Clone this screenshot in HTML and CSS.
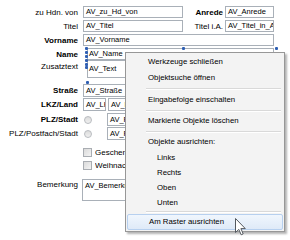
FILE: index.html
```html
<!DOCTYPE html>
<html>
<head>
    <title>Formularentwurf</title>
    <link rel="stylesheet" href="styles.css">
</head>
<body>
    <div class="form">
        <div class="row">
            <span class="lbl">zu Hdn. von</span>
            <div class="field w100">AV_zu_Hd_von</div>
            <span class="lbl2 b">Anrede</span>
            <div class="field w49">AV_Anrede</div>
        </div>
        <div class="row">
            <span class="lbl">Titel</span>
            <div class="field w100">AV_Titel</div>
            <span class="lbl2">Titel i.A.</span>
            <div class="field w49">AV_Titel_in_A</div>
        </div>
        <div class="row">
            <span class="lbl b">Vorname</span>
            <div class="field w191">AV_Vorname</div>
        </div>
        <div class="row row-name">
            <span class="lbl b">Name</span>
            <div class="field inset">AV_Name</div>
        </div>
        <div class="row row-text">
            <span class="lbl">Zusatztext</span>
            <div class="field inset tall">AV_Text</div>
        </div>
        <div class="row row-13 mb1">
            <span class="lbl b">Straße</span>
            <div class="field h13 w60">AV_Straße</div>
        </div>
        <div class="row row-13">
            <span class="lbl b">LKZ/Land</span>
            <div class="field h13 w23">AV_LK</div>
            <div class="field h13 w38">AV_L</div>
        </div>
        <div class="row row-13 mb1">
            <span class="lbl b">PLZ/Stadt</span>
            <span class="radio"></span>
            <div class="field h13 w38">AV_F</div>
        </div>
        <div class="row row-13 mb7">
            <span class="lbl">PLZ/Postfach/Stadt</span>
            <span class="radio"></span>
            <div class="field h13 w38">AV_F</div>
        </div>
        <div class="row row-check mb3">
            <span class="lbl"></span>
            <span class="check"></span>
            <span class="clip">Geschenk</span>
        </div>
        <div class="row row-check mb9">
            <span class="lbl"></span>
            <span class="check"></span>
            <span class="clip">Weihnachtskarte</span>
        </div>
        <div class="row row-memo">
            <span class="lbl">Bemerkung</span>
            <div class="field memo">AV_Bemerkung</div>
        </div>
    </div>

    <!-- Markierungspunkte der ausgewählten Steuerelemente -->
    <div class="handles">
        <span class="hd hd-t1"></span>
        <span class="hd hd-t2"></span>
        <span class="hd hd-t3"></span>
        <span class="hd hd-l1"></span>
        <span class="hd hd-l2"></span>
        <span class="hd hd-l3"></span>
        <span class="hd hd-l4"></span>
        <span class="hd hd-l5"></span>
        <span class="hd hd-l6"></span>
    </div>

    <div class="menu">
        <div class="item">Werkzeuge schließen</div>
        <div class="item">Objektsuche öffnen</div>
        <div class="sep s6"></div>
        <div class="item">Eingabefolge einschalten</div>
        <div class="sep s5"></div>
        <div class="item">Markierte Objekte löschen</div>
        <div class="sep s5"></div>
        <div class="item">Objekte ausrichten:</div>
        <div class="item sub">Links</div>
        <div class="item sub">Rechts</div>
        <div class="item sub">Oben</div>
        <div class="item sub">Unten</div>
        <div class="sep s4"></div>
        <div class="item hover">Am Raster ausrichten</div>
    </div>

    <svg class="cursor" width="12" height="18" viewBox="0 0 12 18">
        <path d="M0.5 0.5 L0.5 14.5 L3.8 11.4 L6.2 16.8 L8.2 15.9 L5.9 10.6 L10.3 10.6 Z" fill="#ffffff" stroke="#555a60" stroke-width="1"/>
    </svg>
</body>
</html>
```

FILE: styles.css
```css
body {
    margin: 0;
    width: 290px;
    height: 240px;
    overflow: hidden;
    position: relative;
    background-color: #ffffff;
    color: #000000;
    font-family: "Liberation Sans", Arial, sans-serif;
    font-size: 8px;
}

.form {
    padding-top: 6px;
}

.row {
    display: flex;
    align-items: center;
    height: 12px;
    margin-bottom: 2px;
    white-space: nowrap;
}

.lbl {
    flex: none;
    width: 78px;
    margin-right: 5px;
    text-align: right;
}

.lbl2 {
    flex: none;
    width: 40px;
    margin-right: 2px;
    text-align: right;
}

.b {
    font-weight: bold;
}

.field {
    flex: none;
    box-sizing: border-box;
    height: 12px;
    border: 1px solid #a9b0b8;
    background-color: #ffffff;
    padding: 0 2px;
    line-height: 10px;
    font-size: 7.5px;
    overflow: hidden;
    white-space: nowrap;
}

.w23 { width: 23px; margin-right: 2px; }
.w38 { width: 38px; }
.w49 { width: 49px; }
.w60 { width: 60px; }
.w100 { width: 100px; }
.w191 { width: 191px; }
.h13 { height: 13px; line-height: 11px; }

.mb1 { margin-bottom: 1px; }
.mb3 { margin-bottom: 3px; }
.mb7 { margin-bottom: 7px; }
.mb9 { margin-bottom: 9px; }

/* Name + Zusatztext sitzen etwas eingerückt */
.row-name {
    margin-bottom: 0;
}

.inset {
    width: 187px;
    margin-left: 4px;
    padding-left: 1px;
}

.row-text {
    height: 18px;
    align-items: flex-start;
    margin-bottom: 6px;
}

.row-text .lbl {
    padding-top: 2px;
}

.tall {
    height: 18px;
    padding-top: 3px;
}

.row-13 {
    height: 13px;
}

.radio {
    flex: none;
    box-sizing: border-box;
    width: 8px;
    height: 8px;
    margin-left: 1px;
    margin-right: 15px;
    border: 1px solid #b9bcc0;
    border-radius: 50%;
    background: linear-gradient(#dcdcdc, #f0f0f0);
}

.row-check {
    height: 10px;
}

.check {
    flex: none;
    box-sizing: border-box;
    width: 9px;
    height: 9px;
    margin-right: 3px;
    border: 1px solid #a9adb2;
    background: linear-gradient(135deg, #dadada, #f4f4f4);
}

.clip {
    width: 45px;
    overflow: hidden;
}

.row-memo {
    height: 22px;
    align-items: flex-start;
}

.row-memo .lbl {
    padding-top: 1px;
}

.memo {
    width: 60px;
    height: 22px;
    margin-left: -1px;
    padding-top: 1px;
}

/* Markierungspunkte */
.hd {
    position: absolute;
    width: 3px;
    height: 3px;
    border-radius: 1px;
    background-color: #2f5fb3;
}

.hd-t1 { left: 85px; top: 47px; }
.hd-t2 { left: 182px; top: 47px; }
.hd-t3 { left: 275px; top: 47px; }
.hd-l1 { left: 85px; top: 51px; }
.hd-l2 { left: 85px; top: 55px; }
.hd-l3 { left: 85px; top: 59px; }
.hd-l4 { left: 85px; top: 63px; }
.hd-l5 { left: 85px; top: 66px; }
.hd-l6 { left: 86px; top: 81px; }

/* Kontextmenü */
.menu {
    position: absolute;
    left: 125px;
    top: 52px;
    width: 160px;
    box-sizing: border-box;
    padding: 1px 0;
    border: 1px solid #979797;
    background-color: #f3f3f3;
    box-shadow: 2px 2px 2px rgba(0, 0, 0, 0.3);
    font-size: 7.8px;
}

.item {
    height: 16px;
    line-height: 16px;
    padding-left: 22px;
    white-space: nowrap;
}

.item.sub {
    height: 15px;
    line-height: 15px;
    padding-left: 31px;
}

.item.hover {
    box-sizing: border-box;
    margin: 0 1px;
    padding-left: 21px;
    line-height: 14px;
    border: 1px solid #b7d0ef;
    border-radius: 2px;
    background: linear-gradient(#f0f6fd, #dfeaf8);
}

.sep {
    display: flex;
    align-items: center;
    padding: 0 3px 0 20px;
}

.sep::after {
    content: "";
    flex: 1;
    height: 1px;
    background-color: #d9d9d9;
    border-bottom: 1px solid #ffffff;
}

.s4 { height: 4px; }
.s5 { height: 5px; }
.s6 { height: 6px; }

.cursor {
    position: absolute;
    left: 235px;
    top: 218px;
}
```
